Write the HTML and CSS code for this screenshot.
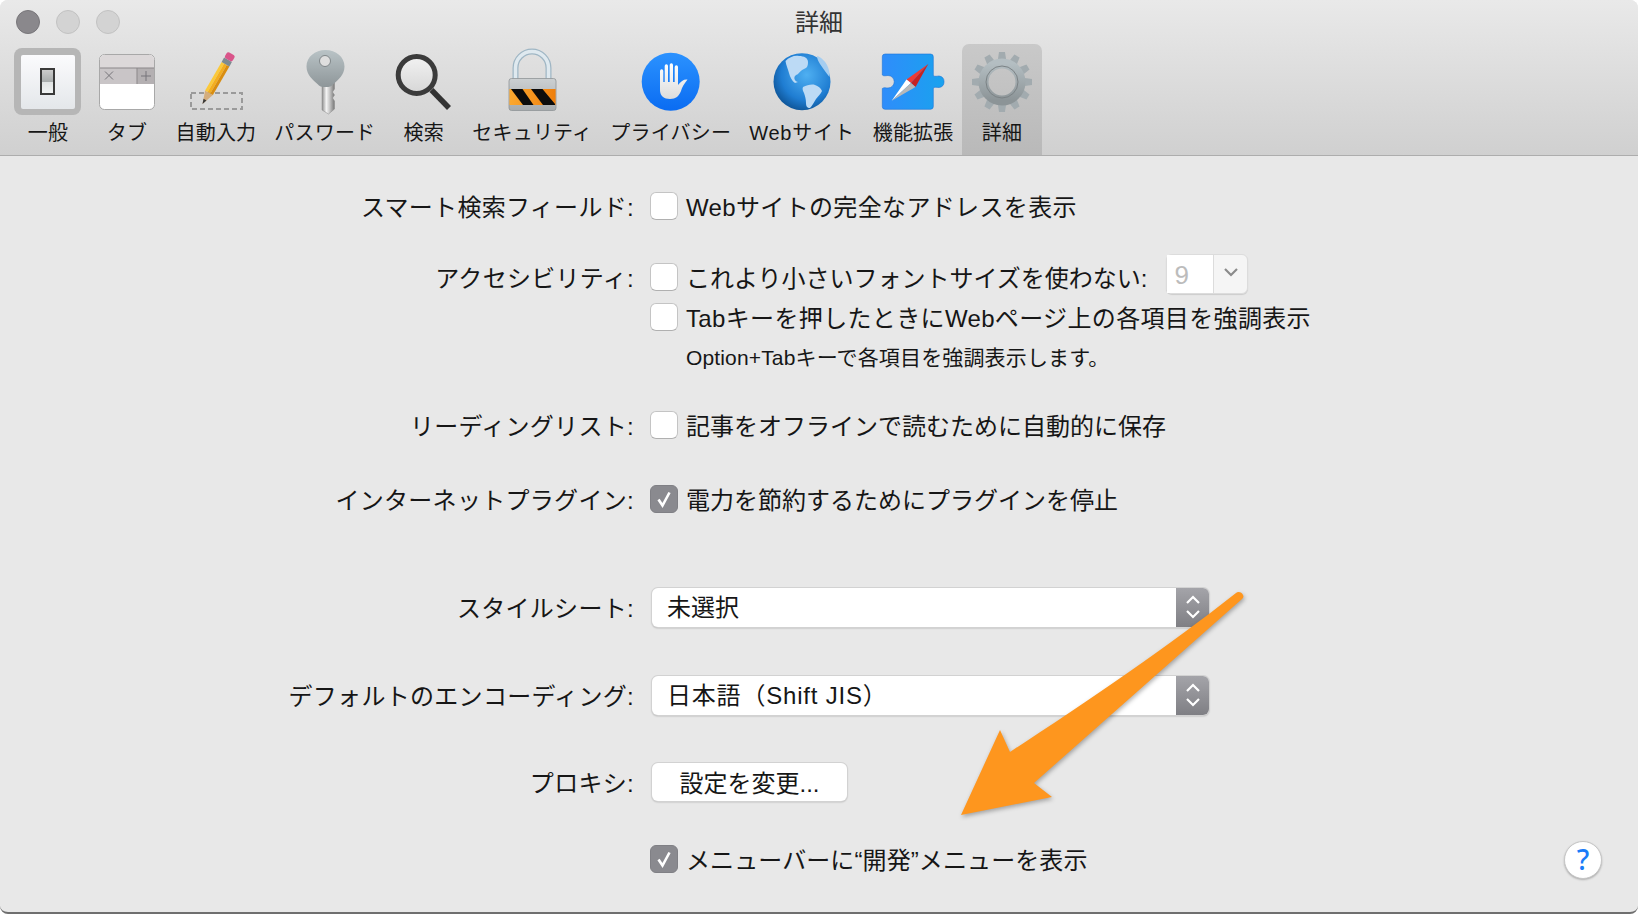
FILE: index.html
```html
<!DOCTYPE html>
<html lang="ja">
<head>
<meta charset="UTF-8" />
<title>詳細</title>
<link rel="stylesheet" href="styles.css">
</head>
<body>
  <div class="window">
    <!-- Title bar + toolbar -->
    <header class="toolbar">
      <div class="titlebar">
        <div class="lights">
          <span class="light light-close"></span>
          <span class="light"></span>
          <span class="light"></span>
        </div>
        <div class="title">詳細</div>
      </div>
      <nav class="tabs">
        <div class="tab">
          <svg class="tab-icon" viewBox="0 0 72 72">
            <defs>
              <linearGradient id="gPlate" x1="0" y1="0" x2="0" y2="1"><stop offset="0" stop-color="#fbfbfd"/><stop offset="1" stop-color="#e4e7ea"/></linearGradient>
              <linearGradient id="gToggle" x1="0" y1="0" x2="0" y2="1"><stop offset="0" stop-color="#cfcfcf"/><stop offset=".5" stop-color="#a9adad"/><stop offset=".51" stop-color="#e0e3e3"/><stop offset="1" stop-color="#f2f4f4"/></linearGradient>
            </defs>
            <rect x="2" y="2" width="67" height="67" rx="8" fill="#b6b6b6"/>
            <rect x="9" y="9" width="54" height="54" rx="2" fill="url(#gPlate)"/>
            <rect x="29" y="23" width="13" height="25" fill="url(#gToggle)" stroke="#3a3a3a" stroke-width="2"/>
          </svg>
          <span class="tab-label">一般</span>
        </div>
        <div class="tab">
          <svg class="tab-icon" viewBox="0 0 72 72">
            <rect x="8.5" y="8.5" width="55" height="55" rx="5" fill="#fff" stroke="#a8a8a8"/>
            <path d="M9 22V13.5A4.5 4.5 0 0 1 13.500 9h45A4.500 4.500 0 0 1 63 13.500V22z" fill="#dcd8d9"/>
            <rect x="9" y="22" width="54" height="16" fill="#c9c5c7"/>
            <rect x="46" y="22" width="17" height="16" fill="#b4b0b2"/>
            <path d="M9 22h54M46 22v16" stroke="#8b8789" fill="none"/>
            <path d="M14 25.500l8 8M22 25.500l-8 8M50 30h10M55 25v10" stroke="#77757a" stroke-width="1" fill="none"/>
          </svg>
          <span class="tab-label">タブ</span>
        </div>
        <div class="tab">
          <svg class="tab-icon" viewBox="0 0 72 72">
            <rect x="11" y="47" width="51" height="16" fill="none" stroke="#9a9a9a" stroke-width="2" stroke-dasharray="5 3"/>
            <g transform="translate(22.5 58) rotate(30)">
              <path d="M0 0L-4.500 -13H4.500z" fill="#d4ad7c"/>
              <path d="M0 0L-1.700 -5H1.700z" fill="#3a3a3a"/>
              <rect x="-4.500" y="-46" width="3" height="33" fill="#fbc93a"/>
              <rect x="-1.500" y="-46" width="3" height="33" fill="#f4ae1e"/>
              <rect x="1.500" y="-46" width="3" height="33" fill="#d98d10"/>
              <rect x="-4.500" y="-51" width="9" height="5" fill="#7d8a90"/>
              <rect x="-4.500" y="-58" width="9" height="7" rx="2" fill="#d9558a"/>
            </g>
          </svg>
          <span class="tab-label">自動入力</span>
        </div>
        <div class="tab">
          <svg class="tab-icon" viewBox="0 0 72 72">
            <defs>
              <linearGradient id="gKey" x1="0" y1="0" x2="0" y2="1"><stop offset="0" stop-color="#b9c3c6"/><stop offset="1" stop-color="#8e9699"/></linearGradient>
              <linearGradient id="gShaft" x1="0" y1="0" x2="1" y2="0"><stop offset="0" stop-color="#8d8d8d"/><stop offset=".35" stop-color="#f4f4f4"/><stop offset=".6" stop-color="#c9c9c9"/><stop offset="1" stop-color="#777"/></linearGradient>
            </defs>
            <path d="M33 36h12.500v7l-2 3 2 3-2 3 2 3v8l-6 5-6.500-4z" fill="url(#gShaft)" stroke="#888" stroke-width=".5"/>
            <path d="M36.500 4C47 4 55.500 11 55.500 20.500C55.500 29 49 34 44 38.500C42 40.500 41 41 36.500 41C32 41 31 40.500 29 38.500C24 34 17.500 29 17.500 20.500C17.500 11 26 4 36.500 4z" fill="url(#gKey)"/>
            <circle cx="36" cy="15" r="5.500" fill="#dedede" stroke="#7f8689" stroke-width="1"/>
          </svg>
          <span class="tab-label">パスワード</span>
        </div>
        <div class="tab">
          <svg class="tab-icon" viewBox="0 0 72 72">
            <defs>
              <linearGradient id="gLens" x1="0" y1="0" x2="0" y2="1"><stop offset="0" stop-color="#f2f2f2"/><stop offset="1" stop-color="#d6d6d6"/></linearGradient>
            </defs>
            <circle cx="28.700" cy="29" r="18.500" fill="url(#gLens)" stroke="#3b3b3b" stroke-width="5"/>
            <path d="M43.500 44L61 62" stroke="#333" stroke-width="5.500" fill="none"/>
          </svg>
          <span class="tab-label">検索</span>
        </div>
        <div class="tab">
          <svg class="tab-icon" viewBox="0 0 72 72">
            <defs>
              <linearGradient id="gLock" x1="0" y1="0" x2="0" y2="1"><stop offset="0" stop-color="#ccd0d2"/><stop offset="1" stop-color="#a7abae"/></linearGradient>
              <linearGradient id="gOrange" x1="0" y1="0" x2="1" y2="0"><stop offset="0" stop-color="#fba830"/><stop offset="1" stop-color="#ef7f0c"/></linearGradient>
            </defs>
            <path d="M19.500 33V22a16.500 16.500 0 0 1 33 0V33" fill="none" stroke="#9fb6c4" stroke-width="6"/>
            <path d="M19.500 33V22a16.500 16.500 0 0 1 33 0V33" fill="none" stroke="#dfe9ef" stroke-width="3.500"/>
            <rect x="13" y="32.500" width="47" height="32" rx="2.500" fill="url(#gLock)" stroke="#8f9497" stroke-width=".8"/>
            <rect x="13.400" y="43" width="46.200" height="16" fill="url(#gOrange)"/>
            <path d="M15 43h11.500l11 16H27zM35 43h11.500l12.500 15v1H47z" fill="#0c0c0c"/>
          </svg>
          <span class="tab-label">セキュリティ</span>
        </div>
        <div class="tab">
          <svg class="tab-icon" viewBox="0 0 72 72">
            <defs>
              <linearGradient id="gBlue" x1="0" y1="0" x2="0" y2="1"><stop offset="0" stop-color="#2b92ff"/><stop offset="1" stop-color="#0a6cf2"/></linearGradient>
              <linearGradient id="gHand" x1="0" y1="0" x2="0" y2="1"><stop offset="0" stop-color="#fff"/><stop offset="1" stop-color="#dcdcdc"/></linearGradient>
            </defs>
            <circle cx="35.700" cy="35.700" r="29" fill="url(#gBlue)"/>
            <path fill="url(#gHand)" d="M25 25a1.650 1.650 0 0 1 3.300 0V36h1.400V20a1.650 1.650 0 0 1 3.300 0V36h1.700V19a1.650 1.650 0 0 1 3.300 0V36h1.700V21a1.650 1.650 0 0 1 3.300 0V39C46 35 49 33 52.500 33.500C49 38 47 41 46 45C44 50 41 53 35 53C29 53 25 50 25 44z"/>
          </svg>
          <span class="tab-label">プライバシー</span>
        </div>
        <div class="tab">
          <svg class="tab-icon" viewBox="0 0 72 72">
            <defs>
              <radialGradient id="gGlobe" cx=".58" cy=".38" r=".68"><stop offset="0" stop-color="#4fb0f2"/><stop offset=".65" stop-color="#1f7dd2"/><stop offset="1" stop-color="#0c4f8f"/></radialGradient>
            </defs>
            <circle cx="36" cy="35.700" r="28.500" fill="url(#gGlobe)"/>
            <path fill="#bcdaf5" d="M19.500 15C23 11 29 9 33 10C38 10 42 12 42 16C42 20 41 22 38 23C35 24 34 26 32 28C30 29 28 30 28.500 33C29 35 31 36 32 36L29 37C26 35 24 31 23 27C22 23 20 19 19.500 15z"/>
            <path fill="#bcdaf5" d="M37 41C41 39 46 38 49 39C52 40 55 42 56 45C55 48 52 50 50 53C48 56 46 60 44 62C41 62 40 60 40 57C40 53 39 50 38 47C37 45 36 43 37 41z"/>
            <path fill="#a5cdf0" d="M51 10C55 11 59 15 61 19C63 23 64 27 63.500 31C60 27 57 22 54 18C52 15 51 12 51 10z"/>
          </svg>
          <span class="tab-label tab-label-wide">Webサイト</span>
        </div>
        <div class="tab">
          <svg class="tab-icon" viewBox="0 0 72 72">
            <defs>
              <linearGradient id="gPuzzle" x1="0" y1="0" x2="1" y2="0"><stop offset="0" stop-color="#2f8dfb"/><stop offset="1" stop-color="#19a2ee"/></linearGradient>
            </defs>
            <path fill="url(#gPuzzle)" stroke="#1d74d6" stroke-width=".6" d="M8 8H53.500A2.800 2.800 0 0 1 56.300 10.800V29.500C58 31 60 30 62 30A5.800 5.800 0 0 1 62 41.500C60 41.500 58 40.500 56.300 42V60.500A2.800 2.800 0 0 1 53.500 63.300H8A2.800 2.800 0 0 1 5.300 60.500V42.500C7 41 9 42 11 42A6.200 6.200 0 0 0 11 29.500C9 29.500 7 30.500 5.300 29V10.800A2.800 2.800 0 0 1 8 8z"/>
            <path d="M51.300 18L29.500 33.500 34 37z" fill="#ee3a34"/>
            <path d="M51.300 18L34 37 38.500 41z" fill="#c62222"/>
            <path d="M14.700 54.700L29.500 33.500 34 37z" fill="#fff"/>
            <path d="M14.700 54.700L34 37 38.500 41z" fill="#b8b8b8"/>
          </svg>
          <span class="tab-label">機能拡張</span>
        </div>
        <div class="tab tab-active">
          <svg class="tab-icon" viewBox="0 0 72 72">
            <defs>
              <linearGradient id="gGear" x1="0" y1="0" x2="0" y2="1"><stop offset="0" stop-color="#b4bec2"/><stop offset="1" stop-color="#8c9497"/></linearGradient>
              <path id="tooth" d="M-3 -30H3L4.600 -19H-4.600z" fill="#a2abaf"/>
            </defs>
            <g transform="translate(36 36)">
              <use href="#tooth"/>
              <use href="#tooth" transform="rotate(30)"/>
              <use href="#tooth" transform="rotate(60)"/>
              <use href="#tooth" transform="rotate(90)"/>
              <use href="#tooth" transform="rotate(120)"/>
              <use href="#tooth" transform="rotate(150)"/>
              <use href="#tooth" transform="rotate(180)"/>
              <use href="#tooth" transform="rotate(210)"/>
              <use href="#tooth" transform="rotate(240)"/>
              <use href="#tooth" transform="rotate(270)"/>
              <use href="#tooth" transform="rotate(300)"/>
              <use href="#tooth" transform="rotate(330)"/>
              <circle r="18.500" fill="none" stroke="url(#gGear)" stroke-width="10"/>
              <circle r="16" fill="none" stroke="#7b8285" stroke-width="1"/>
            </g>
          </svg>
          <span class="tab-label">詳細</span>
        </div>
      </nav>
    </header>

    <!-- Settings -->
    <main class="form">
      <div class="row row-first">
        <div class="row-label">スマート検索フィールド:</div>
        <div class="check-line"><span class="check"></span><span class="check-text text-wide">Webサイトの完全なアドレスを表示</span></div>
      </div>

      <div class="row row-group">
        <div class="row-label">アクセシビリティ:</div>
        <div class="check-line">
          <span class="check"></span><span class="check-text">これより小さいフォントサイズを使わない:</span>
          <div class="spinbox"><span class="spin-value">9</span><span class="spin-arrow"><svg width="18" height="12" viewBox="0 0 18 12"><path d="M3 3l6 6 6-6" fill="none" stroke="#8b8b8b" stroke-width="2.200"/></svg></span></div>
        </div>
      </div>
      <div class="row row-tight">
        <div></div>
        <div class="check-line"><span class="check"></span><span class="check-text text-wide">Tabキーを押したときにWebページ上の各項目を強調表示</span></div>
      </div>
      <div class="row row-note">
        <div></div>
        <div class="note">Option+Tabキーで各項目を強調表示します。</div>
      </div>

      <div class="row row-reading">
        <div class="row-label">リーディングリスト:</div>
        <div class="check-line"><span class="check"></span><span class="check-text">記事をオフラインで読むために自動的に保存</span></div>
      </div>

      <div class="row row-plugin">
        <div class="row-label">インターネットプラグイン:</div>
        <div class="check-line"><span class="check check-on"><svg width="20" height="20" viewBox="0 0 20 20"><path d="M4.500 10.500l4 6L15.500 3.500" fill="none" stroke="#fff" stroke-width="2.600"/></svg></span><span class="check-text">電力を節約するためにプラグインを停止</span></div>
      </div>

      <div class="row row-style">
        <div class="row-label">スタイルシート:</div>
        <div class="popup"><span class="popup-text">未選択</span><span class="popup-arrows"><svg width="18" height="30" viewBox="0 0 18 30"><path d="M3 11l6-6 6 6M3 19l6 6 6-6" fill="none" stroke="#fff" stroke-width="2.200"/></svg></span></div>
      </div>

      <div class="row row-select">
        <div class="row-label">デフォルトのエンコーディング:</div>
        <div class="popup"><span class="popup-text text-wide-more">日本語（Shift JIS）</span><span class="popup-arrows"><svg width="18" height="30" viewBox="0 0 18 30"><path d="M3 11l6-6 6 6M3 19l6 6 6-6" fill="none" stroke="#fff" stroke-width="2.200"/></svg></span></div>
      </div>

      <div class="row row-proxy">
        <div class="row-label">プロキシ:</div>
        <button class="btn-proxy">設定を変更...</button>
      </div>

      <div class="row row-last">
        <div></div>
        <div class="check-line"><span class="check check-on"><svg width="20" height="20" viewBox="0 0 20 20"><path d="M4.500 10.500l4 6L15.500 3.500" fill="none" stroke="#fff" stroke-width="2.600"/></svg></span><span class="check-text text-wide-less">メニューバーに“開発”メニューを表示</span></div>
      </div>
    </main>

    <div class="help">?</div>

    <!-- Orange annotation arrow -->
    <svg class="arrow" viewBox="0 0 1638 914">
      <path d="M1236 593C1238 591 1242 592 1243 595C1244 597 1243 598 1242 599L1034 783L1052 797L961 815L1000 730L1010 752C1090 700 1170 645 1236 593z" fill="#fe961e"/>
    </svg>
  </div>
</body>
</html>
```
FILE: styles.css
```css
:root {
  --clr-bg: #e8e8e8;
  --clr-text: #161616;
  --clr-blue: #1a7cf8;
  --label-col: 634px;
}

* {
  box-sizing: border-box;
}

html, body {
  margin: 0;
  height: 100%;
  background: #fff;
}

body {
  font-family: "Liberation Sans", "Noto Sans CJK JP", sans-serif;
  color: var(--clr-text);
  overflow: hidden;
}

.window {
  position: relative;
  height: 914px;
  background: var(--clr-bg);
  border-bottom: 2px solid #6f6f6f;
  border-radius: 8px;
  overflow: hidden;
}

/* --- Toolbar --- */
.toolbar {
  height: 156px;
  background: linear-gradient(#e9e9e9, #d0d0d0);
  border-bottom: 1px solid #adadad;
}

.titlebar {
  position: relative;
  height: 44px;
}

.lights {
  display: flex;
  gap: 16px;
  padding: 10px 0 0 16px;
}

.light {
  width: 24px;
  height: 24px;
  border-radius: 50%;
  background: #d3d3d3;
  border: 1px solid #c2c2c2;
}

.light-close {
  background: #8a888c;
  border-color: #78767a;
}

.title {
  position: absolute;
  top: 0;
  left: 0;
  right: 0;
  line-height: 46px;
  text-align: center;
  font-size: 24px;
  color: #333;
}

.tabs {
  display: flex;
  padding-left: 8px;
}

.tab {
  display: flex;
  flex-direction: column;
  align-items: center;
  height: 111px;
  min-width: 80px;
  padding: 2px 9.5px 0;
  margin-right: -1px;
}

.tab-active {
  background: linear-gradient(#c9c9c9, #b9b9b9);
  border-radius: 7px 7px 0 0;
}

.tab-icon {
  width: 72px;
  height: 72px;
  margin: 0 -20px;
  flex: none;
}

.tab-label {
  margin-top: 3px;
  font-size: 20px;
  line-height: 24px;
  letter-spacing: .2px;
  white-space: nowrap;
}

.tab-label-wide {
  letter-spacing: .8px;
}

/* --- Settings rows --- */
.row {
  display: grid;
  grid-template-columns: var(--label-col) auto;
  column-gap: 16px;
  justify-content: start;
  align-items: center;
  height: 40px;
  font-size: 24px;
}

.row-first { margin-top: 30px; }
.row-group { margin-top: 31px; }
.row-tight { margin-top: 0; }
.row-note { margin-top: -1px; }
.row-reading { margin-top: 29px; }
.row-plugin { margin-top: 34px; }
.row-style { margin-top: 68px; }
.row-select { margin-top: 48px; }
.row-proxy { margin-top: 47px; }
.row-last { margin-top: 37px; }

.row-label {
  padding-bottom: 2px;
  text-align: right;
  white-space: nowrap;
  letter-spacing: .3px;
}

.check-line {
  display: flex;
  align-items: center;
  gap: 8px;
  white-space: nowrap;
}

.check-text {
  padding-bottom: 2px;
}

.text-wide {
  letter-spacing: .35px;
}

.text-wide-more {
  letter-spacing: .8px;
}

.text-wide-less {
  letter-spacing: .1px;
}

.check {
  display: flex;
  align-items: center;
  justify-content: center;
  width: 28px;
  height: 28px;
  background: #fff;
  border: 1px solid #c4c4c4;
  border-bottom-color: #b0b0b0;
  border-radius: 6px;
}

.check-on {
  background: #8a8a8f;
  border-color: #808085;
}

.note {
  margin-left: 36px;
  font-size: 21px;
  letter-spacing: .15px;
  white-space: nowrap;
}

.spinbox {
  display: flex;
  width: 82px;
  height: 40px;
  margin: -7px 0 0 11px;
  background: #f5f5f5;
  border: 1px solid #dcdcdc;
  border-radius: 6px;
  box-shadow: 0 1px 1px rgba(0,0,0,.12);
}

.spin-value {
  width: 47px;
  padding-left: 7px;
  font-size: 26px;
  line-height: 41px;
  color: #bcbcbc;
  background: #fff;
  border-right: 1px solid #dcdcdc;
}

.spin-arrow {
  flex: 1;
  display: flex;
  justify-content: center;
  padding-top: 11px;
}

.popup {
  display: flex;
  justify-content: space-between;
  width: 557px;
  height: 39px;
  margin-left: 2px;
  background: #fff;
  border-radius: 6px;
  box-shadow: 0 0 0 1px #d2d2d2, 0 1px 2px rgba(0,0,0,.35);
  overflow: hidden;
}

.popup-text {
  padding-left: 15px;
  line-height: 40px;
}

.popup-arrows {
  display: flex;
  align-items: center;
  justify-content: center;
  width: 33px;
  background: linear-gradient(#a4a4a9, #7f7f84);
}

.btn-proxy {
  width: 195px;
  height: 38px;
  margin-left: 2px;
  padding: 0 0 2px;
  font: inherit;
  color: inherit;
  background: #fff;
  border: none;
  border-radius: 6px;
  box-shadow: 0 0 0 1px #d2d2d2, 0 1px 2px rgba(0,0,0,.3);
}

/* --- Overlays --- */
.help {
  position: absolute;
  left: 1564px;
  top: 841px;
  width: 38px;
  height: 38px;
  border-radius: 50%;
  background: #fff;
  border: 1px solid #c6c6c6;
  box-shadow: 0 1px 2px rgba(0,0,0,.25);
  color: var(--clr-blue);
  font-family: "Noto Sans", sans-serif;
  font-size: 28px;
  font-weight: 500;
  line-height: 35px;
  text-align: center;
}

.arrow {
  position: absolute;
  left: 0;
  top: 0;
  width: 1638px;
  height: 914px;
  pointer-events: none;
  filter: drop-shadow(1px 2px 2px rgba(0,0,0,.3));
}
```
